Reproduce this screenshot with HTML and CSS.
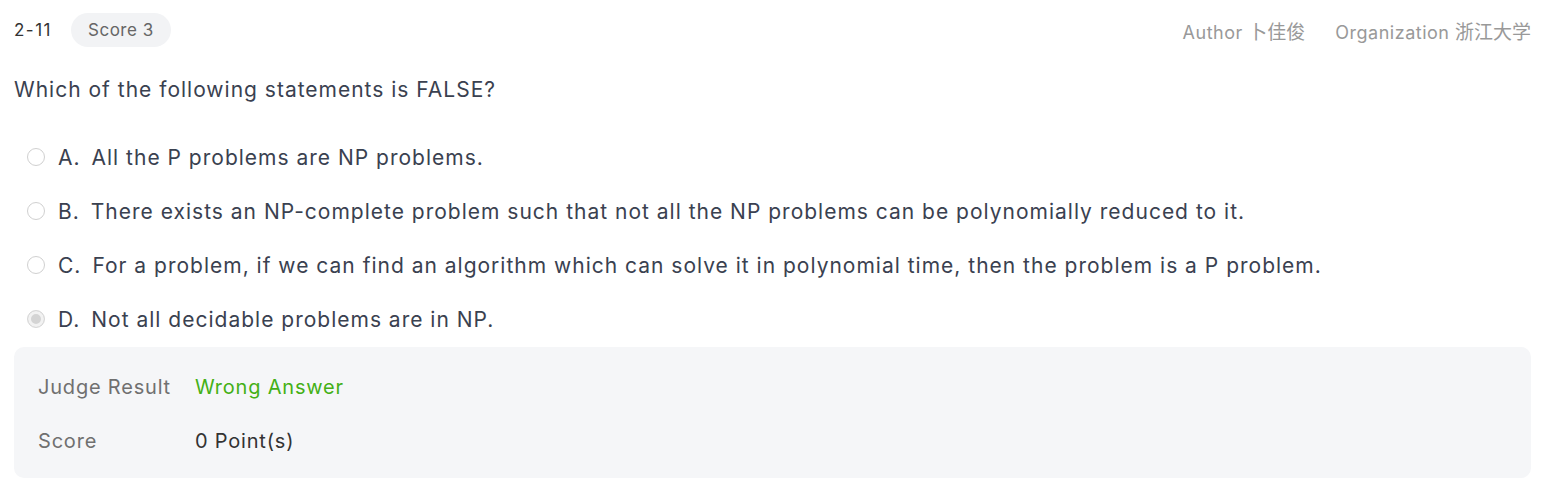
FILE: index.html
```html
<!DOCTYPE html>
<html lang="en">
<head>
<meta charset="utf-8">
<title>2-11</title>
<link rel="stylesheet" href="styles.css">
</head>
<body>
<div class="page">
  <header class="head">
    <div class="head-left">
      <span class="num">2-11</span>
      <span class="pill">Score 3</span>
    </div>
    <div class="head-right">
      <span>Author <span class="cjk">卜佳俊</span></span>
      <span>Organization <span class="cjk">浙江大学</span></span>
    </div>
  </header>
  <p class="question">Which of the following statements is FALSE?</p>
  <ul class="options">
    <li class="opt"><span class="radio"></span><span class="letter">A.</span><span>All the P problems are NP problems.</span></li>
    <li class="opt"><span class="radio"></span><span class="letter">B.</span><span>There exists an NP-complete problem such that not all the NP problems can be polynomially reduced to it.</span></li>
    <li class="opt"><span class="radio"></span><span class="letter">C.</span><span>For a problem, if we can find an algorithm which can solve it in polynomial time, then the problem is a P problem.</span></li>
    <li class="opt"><span class="radio checked"></span><span class="letter">D.</span><span>Not all decidable problems are in NP.</span></li>
  </ul>
  <div class="result">
    <div class="rrow"><span class="rlabel">Judge Result</span><span class="wrong">Wrong Answer</span></div>
    <div class="rrow"><span class="rlabel">Score</span><span class="rval">0 Point(s)</span></div>
  </div>
</div>
</body>
</html>
```
FILE: styles.css
```css
* { box-sizing: border-box; }
html, body { margin: 0; padding: 0; background: #fff; }
body {
  font-family: Inter, "Noto Sans CJK SC", sans-serif;
  color: #3a4150;
  letter-spacing: 0.5px;
}
.page { padding: 0 15px 0 14px; }
.head {
  height: 60px;
  display: flex;
  align-items: center;
  justify-content: space-between;
  font-size: 17px;
}
.head-left { display: flex; align-items: center; gap: 19px; }
.num { color: #333; letter-spacing: 1.5px; }
.pill {
  height: 34px;
  line-height: 34px;
  padding: 0 17px;
  border-radius: 17px;
  background: #f2f3f5;
  color: #666;
}
.head-right {
  display: flex;
  align-items: baseline;
  gap: 30px;
  color: #999;
  font-size: 18px;
}
.cjk {
  font-family: "Noto Sans CJK SC", sans-serif;
  font-size: 19px;
  letter-spacing: 0;
}
.question {
  margin: 15px 0 0;
  font-size: 21px;
  line-height: 30px;
  letter-spacing: 1px;
  color: #3a4150;
}
.options { list-style: none; margin: 26px 0 0; padding: 0; }
.opt {
  display: flex;
  align-items: center;
  height: 54px;
  padding-left: 13px;
  font-size: 21px;
  line-height: 30px;
  letter-spacing: 1px;
}
.radio {
  width: 18px;
  height: 18px;
  border-radius: 50%;
  border: 1px solid #d0d0d0;
  background: #fff;
  margin-right: 13px;
  flex: none;
  position: relative;
  top: -1px;
}
.radio.checked {
  background: #d4d4d4;
  box-shadow: inset 0 0 0 3px #f2f2f2;
  border-color: #d9d9d9;
}
.letter { margin-right: 11px; }
.result {
  background: #f5f6f8;
  border-radius: 10px;
  padding: 13px 24px 10px;
  font-size: 20px;
  letter-spacing: 0.8px;
}
.rrow { display: flex; align-items: center; height: 54px; }
.rlabel { width: 157px; color: #707070; }
.wrong { color: #44b016; }
.rval { color: #333; }
```
